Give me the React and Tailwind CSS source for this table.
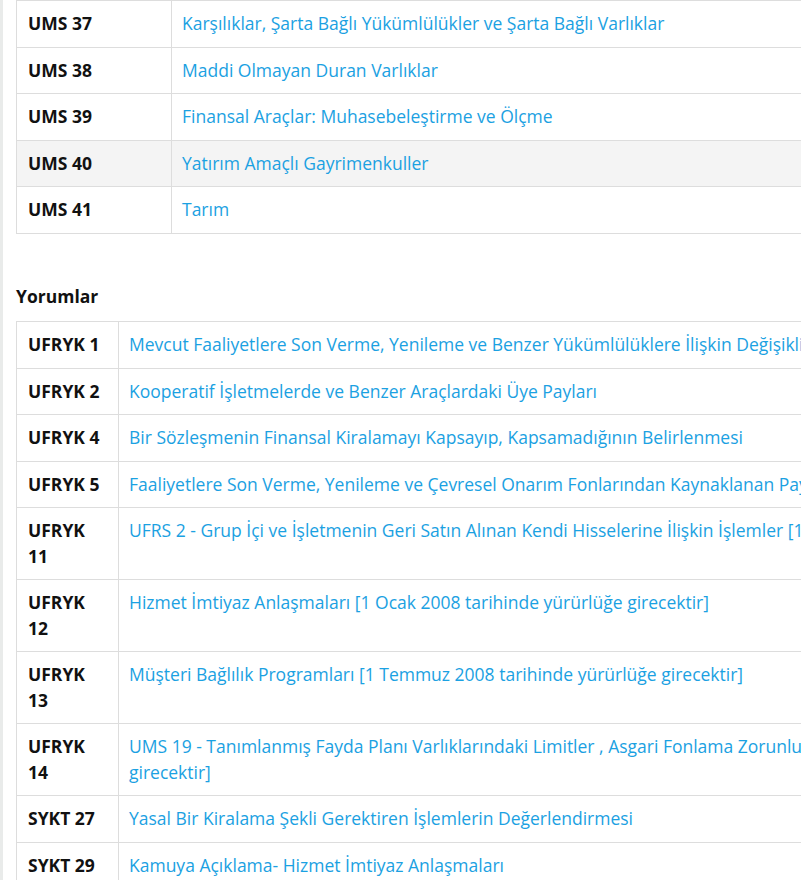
import React from "react";

const standartlar = [
  { kod: "UMS 37", ad: "Karşılıklar, Şarta Bağlı Yükümlülükler ve Şarta Bağlı Varlıklar" },
  { kod: "UMS 38", ad: "Maddi Olmayan Duran Varlıklar" },
  { kod: "UMS 39", ad: "Finansal Araçlar: Muhasebeleştirme ve Ölçme" },
  { kod: "UMS 40", ad: "Yatırım Amaçlı Gayrimenkuller", gri: true },
  { kod: "UMS 41", ad: "Tarım" },
];

const yorumlar = [
  { kod: "UFRYK 1", ad: "Mevcut Faaliyetlere Son Verme, Yenileme ve Benzer Yükümlülüklere İlişkin Değişiklikler" },
  { kod: "UFRYK 2", ad: "Kooperatif İşletmelerde ve Benzer Araçlardaki Üye Payları" },
  { kod: "UFRYK 4", ad: "Bir Sözleşmenin Finansal Kiralamayı Kapsayıp, Kapsamadığının Belirlenmesi" },
  { kod: "UFRYK 5", ad: "Faaliyetlere Son Verme, Yenileme ve Çevresel Onarım Fonlarından Kaynaklanan Paylara İlişkin Haklar" },
  { kod: "UFRYK 11", ad: "UFRS 2 - Grup İçi ve İşletmenin Geri Satın Alınan Kendi Hisselerine İlişkin İşlemler [1 Mart 2007 tarihinde yürürlüğe girecektir]" },
  { kod: "UFRYK 12", ad: "Hizmet İmtiyaz Anlaşmaları [1 Ocak 2008 tarihinde yürürlüğe girecektir]" },
  { kod: "UFRYK 13", ad: "Müşteri Bağlılık Programları [1 Temmuz 2008 tarihinde yürürlüğe girecektir]" },
  {
    kod: "UFRYK 14",
    ad: "UMS 19 - Tanımlanmış Fayda Planı Varlıklarındaki Limitler , Asgari Fonlama Zorunlulukları ve Bunların Etkileşimi [1 Ocak 2008 tarihinde yürürlüğe",
    ek: "girecektir]",
  },
  { kod: "SYKT 27", ad: "Yasal Bir Kiralama Şekli Gerektiren İşlemlerin Değerlendirmesi" },
  { kod: "SYKT 29", ad: "Kamuya Açıklama- Hizmet İmtiyaz Anlaşmaları" },
];

function Tablo({ rows, ilkKolon }) {
  return (
    <table className="table-fixed border-collapse w-[1600px]">
      <colgroup>
        <col className={ilkKolon} />
        <col />
      </colgroup>
      <tbody>
        {rows.map((r) => (
          <tr key={r.kod} className={r.gri ? "bg-[#f4f4f4]" : "bg-white"}>
            <td className="border border-[#dddddd] px-[11px] py-[10px] align-top font-bold text-[#111111]">
              {r.kod}
            </td>
            <td className="border border-[#dddddd] pl-[10px] pr-[11px] py-[10px] align-top whitespace-nowrap">
              <a className="text-[#1ba1e2] cursor-pointer">
                {r.ad}
                {r.ek && (
                  <>
                    <br />
                    {r.ek}
                  </>
                )}
              </a>
            </td>
          </tr>
        ))}
      </tbody>
    </table>
  );
}

export default function App() {
  return (
    <div
      className="flex min-h-screen bg-white text-[17.5px] leading-[25.5px] text-[#222]"
      style={{ fontFamily: '"Open Sans", "Liberation Sans", sans-serif' }}
    >
      <div className="w-[3px] shrink-0 bg-[#e9ebea]" />
      <main className="flex-1 overflow-hidden pl-[13px]">
        <Tablo rows={standartlar} ilkKolon="w-[155px]" />

        <h3 className="mt-[50px] mb-[12px] font-bold text-[#111111]">Yorumlar</h3>

        <Tablo rows={yorumlar} ilkKolon="w-[102px]" />
      </main>
    </div>
  );
}
